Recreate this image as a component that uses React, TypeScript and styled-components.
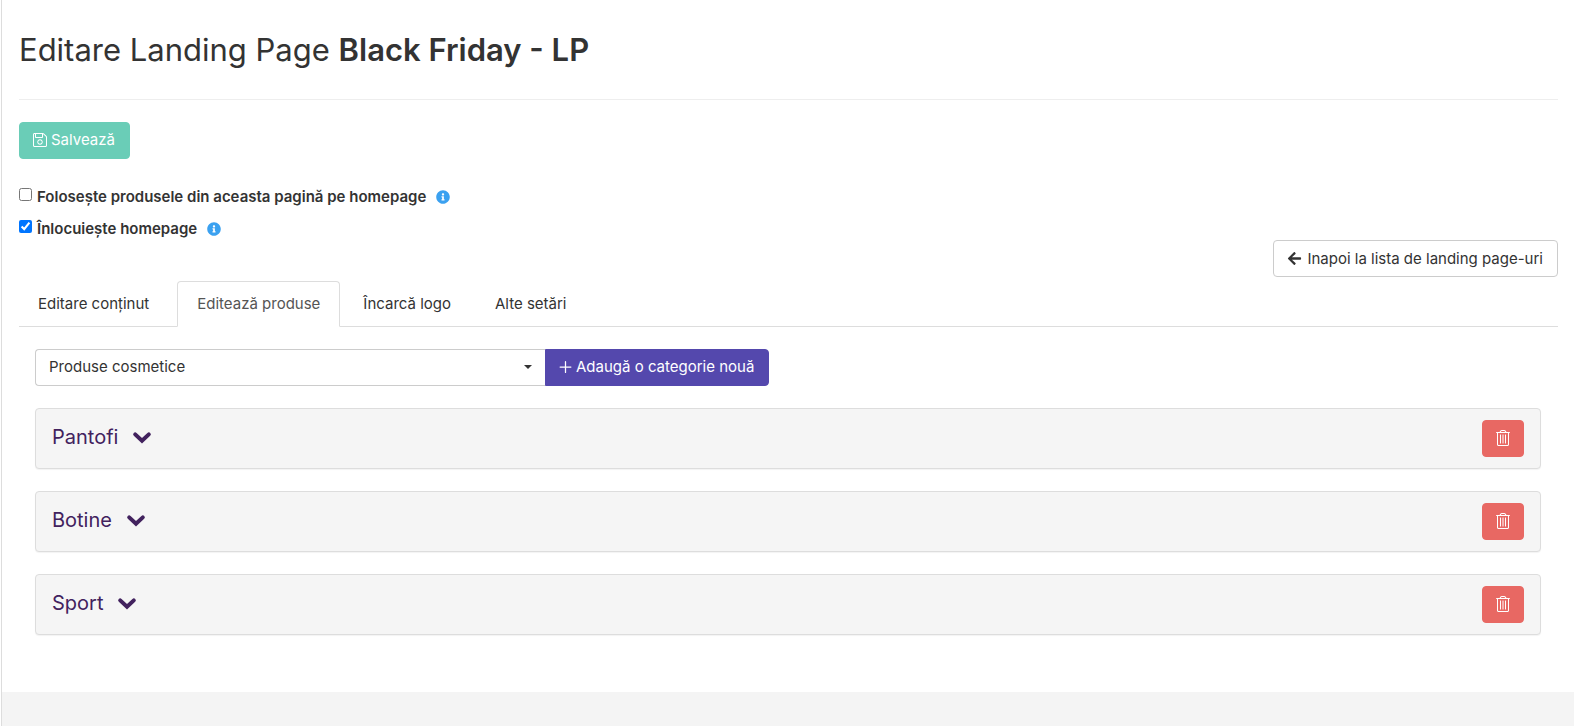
import React from "react";
import styled, { createGlobalStyle } from "styled-components";
import { FaArrowLeft, FaInfoCircle } from "react-icons/fa";

const GlobalStyle = createGlobalStyle`
  *, *::before, *::after { box-sizing: border-box; }
  body {
    margin: 0;
    background: #fff;
    color: #333;
    font: 400 15px/22px Inter, "Liberation Sans", sans-serif;
  }
  button, select, input { font: inherit; }
`;

const Shell = styled.div`
  min-height: 100vh;
  margin: 0 4px 0 1px;
  border-left: 1px solid #ddd;
  background: #f4f4f4;
`;

const Page = styled.main`
  background: #fff;
  padding: 31px 16px 57px 17px;
`;

const Title = styled.h1`
  margin: 0 0 31px;
  font-size: 31px;
  line-height: 37px;
  font-weight: 400;
`;

const TitleName = styled.strong`
  font-weight: 600;
`;

const Toolbar = styled.div`
  border-top: 1px solid #eee;
  padding: 22px 0 23px;
`;

const Button = styled.button<{ $bg: string }>`
  display: inline-flex;
  align-items: center;
  justify-content: center;
  gap: 4px;
  height: 37px;
  padding: 0 14px 1px 13px;
  border: 1px solid ${(p) => p.$bg};
  border-radius: 4px;
  background: ${(p) => p.$bg};
  color: #fff;
  white-space: nowrap;
  cursor: pointer;
`;

const SaveButton = styled(Button)`
  opacity: 0.9;
`;

const AddButton = styled(Button)`
  border-radius: 0 4px 4px 0;
`;

const DeleteButton = styled(Button)`
  width: 42px;
  padding: 0 1px 1px 0;
`;

const BackLink = styled.a`
  display: inline-flex;
  align-items: center;
  gap: 5px;
  height: 37px;
  padding: 0 14px 0 13px;
  border: 1px solid #ccc;
  border-radius: 4px;
  color: #333;
  text-decoration: none;
  white-space: nowrap;
`;

const Options = styled.div`
  display: flex;
  justify-content: space-between;
  align-items: flex-end;
  margin-bottom: 4px;
`;

const Checks = styled.div`
  display: flex;
  flex-direction: column;
  gap: 10px;
  padding: 4px 0 37px;
`;

const CheckRow = styled.label`
  display: flex;
  align-items: center;
  font-weight: 600;
  height: 22px;
`;

const Checkbox = styled.input`
  width: 13px;
  height: 13px;
  margin: 0 5px 6px 0;
`;

const Hint = styled(FaInfoCircle)`
  margin-left: 10px;
  font-size: 14px;
  color: #3ba1f0;
`;

const Tabs = styled.div`
  display: flex;
  gap: 2px;
  border-bottom: 1px solid #ddd;
`;

const Tab = styled.button<{ $active?: boolean }>`
  height: 46px;
  margin-bottom: -1px;
  padding: 0 ${(p) => (p.$active ? 19 : 20)}px;
  border: 1px solid ${(p) => (p.$active ? "#ddd" : "transparent")};
  border-bottom-color: ${(p) => (p.$active ? "#fff" : "transparent")};
  border-radius: 4px 4px 0 0;
  background: ${(p) => (p.$active ? "#fff" : "transparent")};
  color: ${(p) => (p.$active ? "#555" : "#333")};
  cursor: pointer;

  &:first-child {
    padding: 0 25px 0 18px;
  }
`;

const TabPanel = styled.section`
  padding: 22px 17px 0 16px;
`;

const AddRow = styled.div`
  display: flex;
  margin-bottom: 22px;
`;

const SelectWrap = styled.div`
  position: relative;
  flex: 0 1 510px;
  min-width: 200px;
`;

const Select = styled.select`
  appearance: none;
  width: 100%;
  height: 37px;
  padding: 0 32px 1px 13px;
  border: 1px solid #ccc;
  border-right: 0;
  border-radius: 4px 0 0 4px;
  background: #fff;
  color: #333;
`;

const Caret = styled.span`
  position: absolute;
  right: 13px;
  top: 16px;
  border: 4px solid transparent;
  border-top-color: #333;
  border-bottom: 0;
  pointer-events: none;
`;

const CategoryList = styled.div`
  display: grid;
  gap: 22px;
`;

const Category = styled.article`
  display: flex;
  justify-content: space-between;
  align-items: center;
  padding: 11px 16px;
  border: 1px solid #ddd;
  border-radius: 4px;
  background: #f5f5f5;
  box-shadow: 0 1px 1px rgba(0, 0, 0, 0.05);
`;

const CategoryToggle = styled.button`
  display: flex;
  align-items: center;
  gap: 14px;
  padding: 0 0 3px;
  border: 0;
  background: none;
  color: #42225e;
  font-size: 20px;
  line-height: 24px;
  cursor: pointer;
`;

const ChevronIcon = () => (
  <svg width="20" height="20" viewBox="0 0 20 20" fill="none" stroke="currentColor" strokeWidth="4" strokeLinecap="round" aria-hidden="true">
    <path d="M3.2 7.4L10 13.8L16.8 7.4" />
  </svg>
);

const SaveIcon = () => (
  <svg width="14" height="16" viewBox="0 0 448 512" fill="currentColor" aria-hidden="true">
    <path d="M433.941 129.941l-83.882-83.882A48 48 0 0 0 316.118 32H48C21.49 32 0 53.49 0 80v352c0 26.51 21.49 48 48 48h352c26.51 0 48-21.49 48-48V163.882a48 48 0 0 0-14.059-33.941zM288 64v96H96V64h192zm128 368c0 8.822-7.178 16-16 16H48c-8.822 0-16-7.178-16-16V80c0-8.822 7.178-16 16-16h16v104c0 13.255 10.745 24 24 24h208c13.255 0 24-10.745 24-24V64.491a15.888 15.888 0 0 1 7.432 4.195l83.882 83.882A15.895 15.895 0 0 1 416 163.882V432zM224 232c-48.523 0-88 39.477-88 88s39.477 88 88 88 88-39.477 88-88-39.477-88-88-88zm0 144c-30.879 0-56-25.121-56-56s25.121-56 56-56 56 25.121 56 56-25.121 56-56 56z" />
  </svg>
);

const PlusIcon = () => (
  <svg width="13" height="16" viewBox="0 0 384 512" fill="none" stroke="currentColor" strokeWidth="40" strokeLinecap="round" aria-hidden="true">
    <path d="M20 256H364M192 84V428" />
  </svg>
);

const TrashIcon = () => (
  <svg width="14" height="16" viewBox="0 0 448 512" fill="currentColor" aria-hidden="true">
    <path d="M336 64l-33.6-44.8C293.3 7.1 279.1 0 264 0h-80c-15.1 0-29.3 7.1-38.4 19.2L112 64H24c-13.3 0-24 10.7-24 24v2c0 3.3 2.7 6 6 6h26v368c0 26.5 21.5 48 48 48h288c26.5 0 48-21.5 48-48V96h26c3.3 0 6-2.7 6-6v-2c0-13.3-10.7-24-24-24h-88zM184 32h80c5 0 9.8 2.4 12.8 6.4L296 64H152l19.2-25.6c3-4 7.8-6.4 12.8-6.4zm200 432c0 8.8-7.2 16-16 16H80c-8.8 0-16-7.2-16-16V96h320v368zm-176-44V156c0-6.6 5.4-12 12-12h8c6.6 0 12 5.4 12 12v264c0 6.6-5.4 12-12 12h-8c-6.6 0-12-5.4-12-12zm-80 0V156c0-6.6 5.4-12 12-12h8c6.6 0 12 5.4 12 12v264c0 6.6-5.4 12-12 12h-8c-6.6 0-12-5.4-12-12zm160 0V156c0-6.6 5.4-12 12-12h8c6.6 0 12 5.4 12 12v264c0 6.6-5.4 12-12 12h-8c-6.6 0-12-5.4-12-12z" />
  </svg>
);

const tabs = ["Editare conținut", "Editează produse", "Încarcă logo", "Alte setări"];
const categories = ["Pantofi", "Botine", "Sport"];

export default function App() {
  const [active, setActive] = React.useState(1);
  return (
    <Shell>
      <GlobalStyle />
      <Page>
        <Title>
          Editare Landing Page <TitleName>Black Friday - LP</TitleName>
        </Title>
        <Toolbar>
          <SaveButton type="button" $bg="#5ac8b0">
            <SaveIcon />
            Salvează
          </SaveButton>
        </Toolbar>
        <Options>
          <Checks>
            <CheckRow>
              <Checkbox type="checkbox" />
              Folosește produsele din aceasta pagină pe homepage
              <Hint />
            </CheckRow>
            <CheckRow>
              <Checkbox type="checkbox" defaultChecked />
              Înlocuiește homepage
              <Hint />
            </CheckRow>
          </Checks>
          <BackLink href="#">
            <FaArrowLeft size={15} />
            Inapoi la lista de landing page-uri
          </BackLink>
        </Options>
        <Tabs role="tablist">
          {tabs.map((name, i) => (
            <Tab key={name} type="button" role="tab" aria-selected={i === active} $active={i === active} onClick={() => setActive(i)}>
              {name}
            </Tab>
          ))}
        </Tabs>
        <TabPanel role="tabpanel">
          <AddRow>
            <SelectWrap>
              <Select aria-label="Categorie" defaultValue="Produse cosmetice">
                <option>Produse cosmetice</option>
              </Select>
              <Caret />
            </SelectWrap>
            <AddButton type="button" $bg="#5448ad">
              <PlusIcon />
              Adaugă o categorie nouă
            </AddButton>
          </AddRow>
          <CategoryList>
            {categories.map((name) => (
              <Category key={name}>
                <CategoryToggle type="button">
                  {name}
                  <ChevronIcon />
                </CategoryToggle>
                <DeleteButton type="button" $bg="#e86863" aria-label={`Șterge ${name}`}>
                  <TrashIcon />
                </DeleteButton>
              </Category>
            ))}
          </CategoryList>
        </TabPanel>
      </Page>
    </Shell>
  );
}
